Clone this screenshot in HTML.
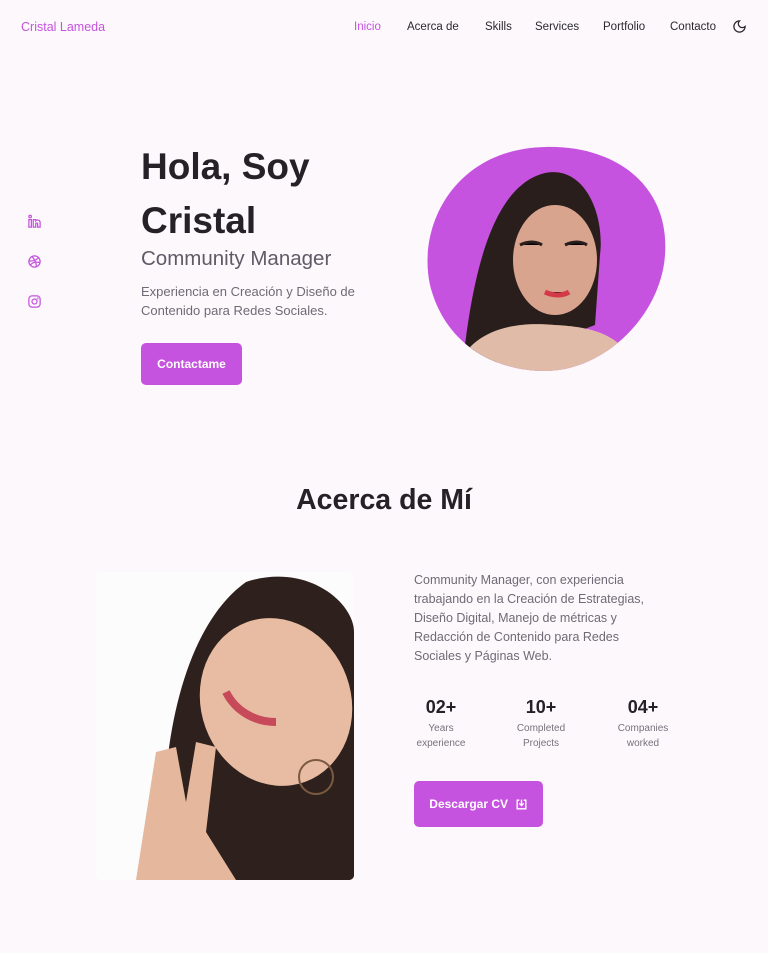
<!DOCTYPE html>
<html><head><meta charset="utf-8"><style>
*{margin:0;padding:0;box-sizing:border-box}
body{width:768px;height:953px;background:#fcf8fc;font-family:"Liberation Sans",sans-serif;color:#242226;position:relative;overflow:hidden}
.a{position:absolute}
.nav{font-size:11.5px;color:#2a2a2e;top:21px}
.btn{background:#c653df;color:#fff;font-weight:bold;border-radius:5px;display:flex;align-items:center;justify-content:center}
.gray{color:#6f6a75}
.stat{text-align:center;width:80px}
.stat b{font-size:18px;display:block;color:#242226}
.stat span{font-size:10px;color:#77727c;line-height:15px;display:block;margin-top:3px}
</style></head><body>
<div class="a" style="left:21px;top:20px;font-size:12.5px;color:#c653df">Cristal Lameda</div>
<div class="a nav" style="left:354px;color:#c653df">Inicio</div>
<div class="a nav" style="left:407px">Acerca de</div>
<div class="a nav" style="left:485px">Skills</div>
<div class="a nav" style="left:535px">Services</div>
<div class="a nav" style="left:603px">Portfolio</div>
<div class="a nav" style="left:670px">Contacto</div>
<svg class="a" style="left:732px;top:19px" width="15" height="15" viewBox="0 0 24 24" fill="none" stroke="#2a2a2e" stroke-width="2"><path d="M12 3a6 6 0 0 0 9 9 9 9 0 1 1-9-9z"/></svg>

<svg class="a" style="left:27px;top:214px" width="15" height="15" viewBox="0 0 24 24" fill="none" stroke="#c653df" stroke-width="2"><rect x="3" y="9" width="4" height="12"/><circle cx="5" cy="4" r="2"/><path d="M10 21V9h4v2a4 4 0 0 1 7 3v7h-4v-6a2 2 0 0 0-3 0v6z"/></svg>
<svg class="a" style="left:27px;top:254px" width="15" height="15" viewBox="0 0 24 24" fill="none" stroke="#c653df" stroke-width="2"><circle cx="12" cy="12" r="9"/><path d="M8 4c5 5 7 11 7 17M3 11c6 1 12-1 16-6M5 18c4-5 10-6 16-4"/></svg>
<svg class="a" style="left:27px;top:294px" width="15" height="15" viewBox="0 0 24 24" fill="none" stroke="#c653df" stroke-width="2"><rect x="3" y="3" width="18" height="18" rx="5"/><circle cx="12" cy="12" r="4"/><circle cx="17" cy="7" r="0.5"/></svg>

<div class="a" style="left:141px;top:140px;font-size:37px;font-weight:bold;line-height:54px">Hola, Soy<br>Cristal</div>
<div class="a gray" style="left:141px;top:247px;font-size:20.5px;color:#5f5a66">Community Manager</div>
<div class="a gray" style="left:141px;top:282px;font-size:13px;line-height:19px">Experiencia en Creación y Diseño de<br>Contenido para Redes Sociales.</div>
<div class="a btn" style="left:141px;top:343px;width:101px;height:42px;font-size:12px">Contactame</div>

<svg class="a" style="left:425px;top:145px" width="242" height="228" viewBox="0 0 242 228">
<defs><clipPath id="c"><path d="M120 2C190 0 245 40 240 110C236 170 180 226 120 226C70 226 20 200 5 140C-8 80 30 4 120 2Z"/></clipPath></defs>
<path d="M120 2C190 0 245 40 240 110C236 170 180 226 120 226C70 226 20 200 5 140C-8 80 30 4 120 2Z" fill="#c653df"/>
<g clip-path="url(#c)">
<path d="M40 200C50 120 70 40 120 28C160 20 180 70 175 110L170 180L40 230Z" fill="#2a1e1c"/>
<ellipse cx="130" cy="115" rx="42" ry="55" fill="#d9a48e"/>
<path d="M30 230C40 190 80 175 130 180C170 182 200 190 215 230Z" fill="#e0bca8"/>
<path d="M95 100c8-4 16-4 22 0M140 100c8-4 16-4 22 0" stroke="#2a1e1c" stroke-width="3"/>
<path d="M120 147c8 4 18 4 24 0" stroke="#d23a48" stroke-width="5"/>
</g></svg>

<div class="a" style="left:0;width:768px;top:484px;text-align:center;font-size:28.5px;font-weight:bold">Acerca de Mí</div>

<div class="a" style="left:96px;top:572px;width:258px;height:308px;border-radius:5px;overflow:hidden;background:#fdfcfc">
<svg width="258" height="308" viewBox="0 0 258 308">
<path d="M70 308C60 200 80 60 150 10C210 -10 258 30 258 60V308Z" fill="#2e211d"/>
<ellipse cx="180" cy="130" rx="75" ry="85" fill="#e8bba3" transform="rotate(-20 180 130)"/>
<path d="M130 120c10 20 30 30 50 30" stroke="#c74a5a" stroke-width="8" fill="none"/>
<path d="M40 308L60 180 80 175 90 230 100 170 120 175 110 260 140 308Z" fill="#e5b79d"/>
<path d="M170 240C230 230 258 250 258 308H150Z" fill="#2e211d"/>
<circle cx="220" cy="205" r="17" fill="none" stroke="#7a5a40" stroke-width="2"/>
</svg></div>

<div class="a gray" style="left:414px;top:571px;font-size:12.5px;line-height:19px;width:255px">Community Manager, con experiencia trabajando en la Creación de Estrategias, Diseño Digital, Manejo de métricas y Redacción de Contenido para Redes Sociales y Páginas Web.</div>
<div class="a stat" style="left:401px;top:697px"><b>02+</b><span>Years<br>experience</span></div>
<div class="a stat" style="left:501px;top:697px"><b>10+</b><span>Completed<br>Projects</span></div>
<div class="a stat" style="left:603px;top:697px"><b>04+</b><span>Companies<br>worked</span></div>
<div class="a btn" style="left:414px;top:781px;width:129px;height:46px;font-size:12px">Descargar CV&nbsp;&nbsp;<svg width="13" height="13" viewBox="0 0 24 24" fill="none" stroke="#fff" stroke-width="2.5"><path d="M8 4H4v16h16V4h-4M12 3v11M8 10l4 4 4-4"/></svg></div>
</body></html>
